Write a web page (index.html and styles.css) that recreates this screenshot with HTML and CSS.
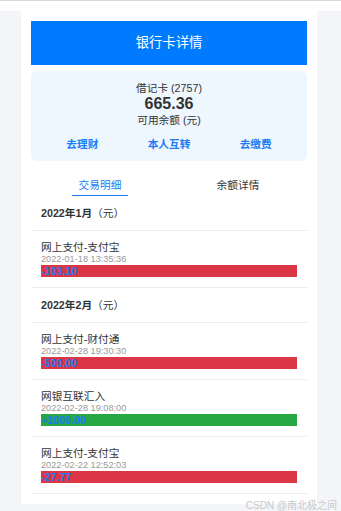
FILE: index.html
```html
<!DOCTYPE html>
<html lang="zh-CN">
<head>
  <meta charset="UTF-8" />
  <meta name="viewport" content="width=device-width, initial-scale=1.0"/>
  <title>银行卡详情</title>
  <link rel="stylesheet" href="styles.css">
</head>

<body>
  <div class="topbar"></div>

  <div class="page">
    <div class="container">
      <div class="title-bar">银行卡详情</div>

      <div class="card-info">
        <div class="card-name">借记卡 (2757)</div>
        <div class="balance">665.36</div>
        <div class="balance-label">可用余额 (元)</div>
        <div class="actions">
          <a class="action">去理财</a>
          <a class="action">本人互转</a>
          <a class="action">去缴费</a>
        </div>
      </div>

      <div class="tabs">
        <div class="tab"><span class="tab-text active">交易明细</span></div>
        <div class="tab"><span class="tab-text">余额详情</span></div>
      </div>

      <div class="month">2022年1月<span class="unit">（元）</span></div>
      <div class="record">
        <div class="record-title">网上支付-支付宝</div>
        <div class="record-time">2022-01-18 13:35:36</div>
        <div class="record-amount out">-103.10</div>
      </div>

      <div class="month">2022年2月<span class="unit">（元）</span></div>
      <div class="record">
        <div class="record-title">网上支付-财付通</div>
        <div class="record-time">2022-02-28 19:30:30</div>
        <div class="record-amount out">-500.00</div>
      </div>
      <div class="record">
        <div class="record-title">网银互联汇入</div>
        <div class="record-time">2022-02-28 19:08:00</div>
        <div class="record-amount in">+1000.00</div>
      </div>
      <div class="record">
        <div class="record-title">网上支付-支付宝</div>
        <div class="record-time">2022-02-22 12:52:03</div>
        <div class="record-amount out">-27.77</div>
      </div>
    </div>
  </div>

  <div class="watermark">CSDN @南北极之间</div>
</body>
</html>
```

FILE: styles.css
```css
body {
  margin: 0;
  font-family: 'Liberation Sans', 'Noto Sans CJK SC', sans-serif;
  background: #f4f5f9;
  color: #333;
  min-height: 100vh;
}
.topbar {
  height: 10px;
  background: #fff;
  border-top: 1px solid #d9d9d9;
}
.page {
  display: flex;
  padding-left: 21px;
}
.container {
  width: 276px;
  background: #fff;
  padding: 10px;
}
.title-bar {
  background: #007bff;
  color: #fff;
  height: 44px;
  line-height: 44px;
  text-align: center;
  font-size: 13.3px;
}
.card-info {
  margin-top: 6px;
  background: #eef6fe;
  border-radius: 6px;
  padding: 10px 8px;
  text-align: center;
}
.card-name, .balance-label {
  font-size: 10.7px;
  line-height: 14px;
}
.balance {
  font-size: 16px;
  font-weight: bold;
  line-height: 18px;
}
.balance-label {
  line-height: 15px;
}
.actions {
  display: flex;
  margin-top: 9px;
}
.action {
  flex: 1;
  color: #1a7cf5;
  font-weight: bold;
  font-size: 10.7px;
  line-height: 14px;
  cursor: pointer;
}
.tabs {
  display: flex;
  margin-top: 10px;
}
.tab {
  flex: 1;
  text-align: center;
}
.tab-text {
  display: inline-block;
  font-size: 10.7px;
  line-height: 14px;
  padding: 7px 7px 3px;
  border-bottom: 1px solid transparent;
}
.tab-text.active {
  color: #1a7cf5;
  border-bottom-color: #1a7cf5;
}
.month {
  height: 34px;
  line-height: 34px;
  padding: 0 10px;
  font-size: 10.7px;
  font-weight: bold;
  border-bottom: 1px solid #ebebeb;
}
.month .unit {
  font-weight: normal;
}
.record {
  padding: 10px;
  border-bottom: 1px solid #ebebeb;
}
.record-title {
  font-size: 10.7px;
  line-height: 13px;
  color: #333;
}
.record-time {
  font-size: 9.2px;
  line-height: 11px;
  color: #999;
}
.record-amount {
  font-size: 10.7px;
  line-height: 12px;
  font-weight: bold;
  color: #1a7cf5;
}
.record-amount.out {
  background: #dc3545;
}
.record-amount.in {
  background: #28a745;
}
.watermark {
  position: absolute;
  right: 4px;
  top: 497px;
  font-size: 10px;
  color: #c8c8c8;
}
```
